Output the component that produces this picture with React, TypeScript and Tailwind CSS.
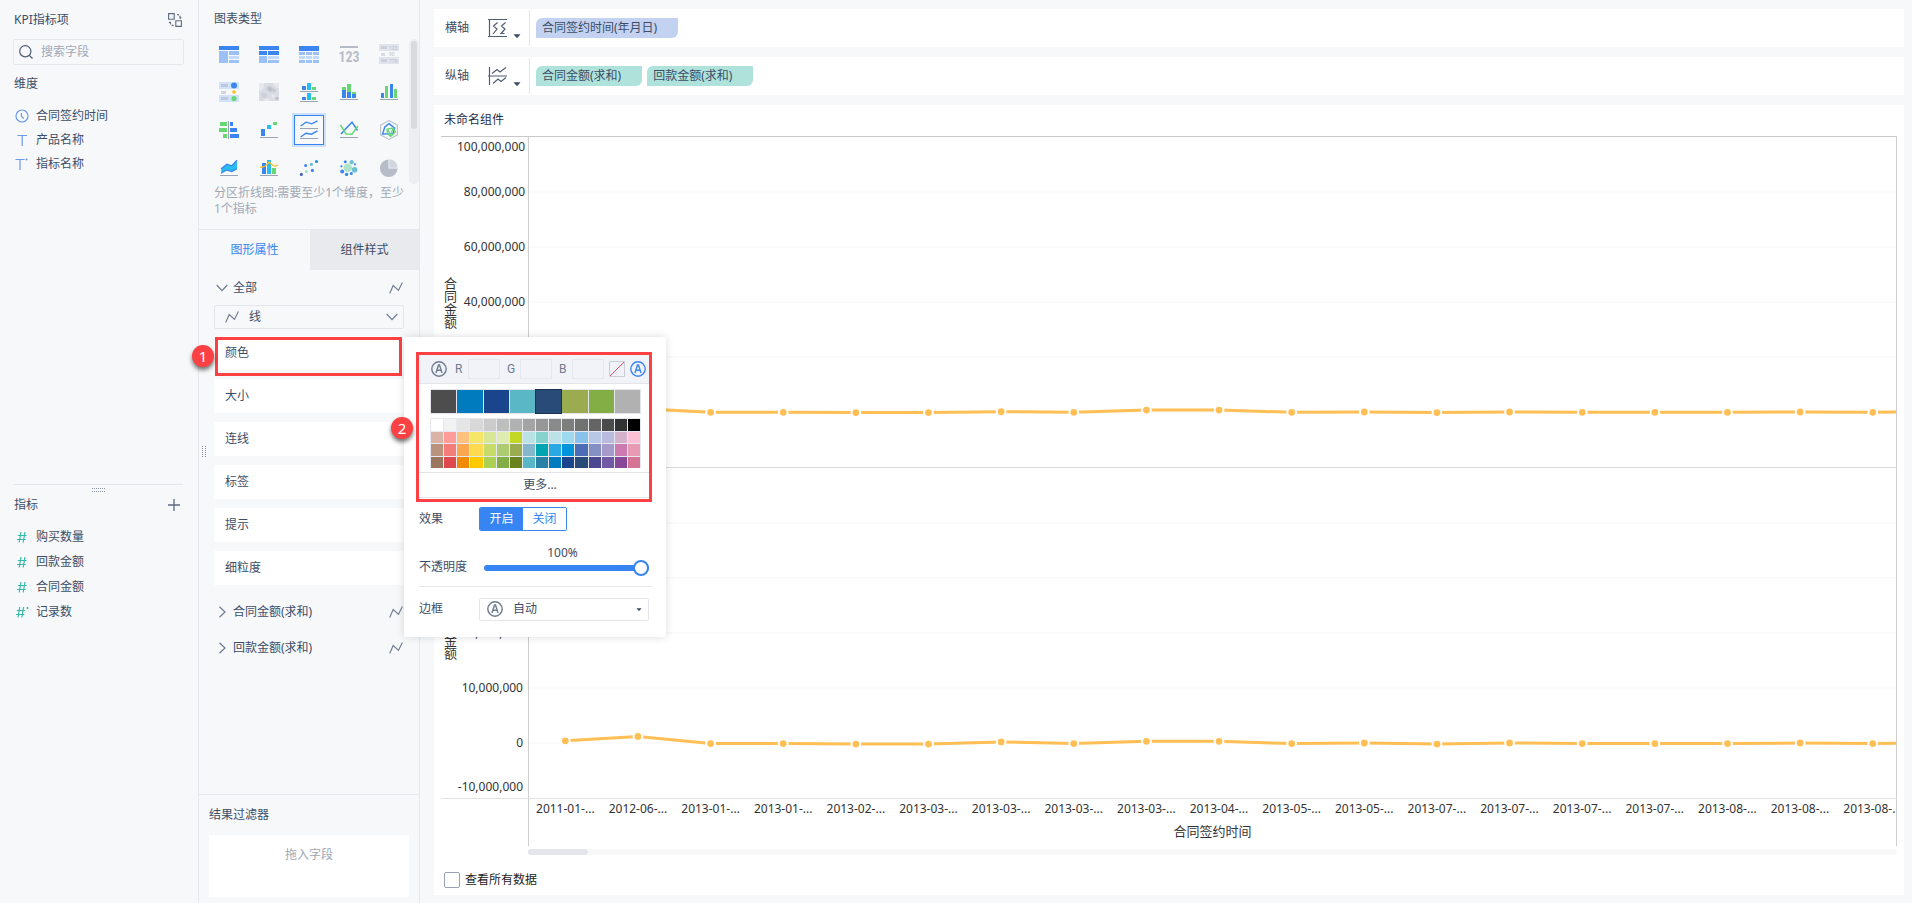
import React from "react";

const BLUE = "#3a85f0";
const CYAN = "#27bdf0";
const GREEN = "#67d774";
const AXIS = "#9aa3b1";

const DATES = [
  "2011-01-...", "2012-06-...", "2013-01-...", "2013-01-...", "2013-02-...", "2013-03-...", "2013-03-...",
  "2013-03-...", "2013-03-...", "2013-04-...", "2013-05-...", "2013-05-...", "2013-07-...", "2013-07-...",
  "2013-07-...", "2013-07-...", "2013-08-...", "2013-08-...", "2013-08-...",
];

// Values in millions; the last one lies beyond the visible window.
const CONTRACT = [0.6, 1.3, -0.1, -0.1, -0.2, -0.2, 0.1, -0.1, 0.7, 0.7, -0.1, 0, -0.2, 0, -0.1, -0.1, -0.1, 0, -0.1, 0.1];
const PAYMENT = [0.4, 1.2, -0.1, -0.1, -0.2, -0.2, 0.2, -0.1, 0.3, 0.3, -0.1, 0, -0.2, 0, -0.1, -0.1, -0.1, 0, -0.1, 0.1];

// Number of categories that fit in the plot.
const VISIBLE = 18.82;

const THEME = ["#4d4d4d", "#007cbe", "#1a458c", "#5ab8c6", "#284b78", "#9aab50", "#83ae45", "#b1b1b1"];

const PALETTE = [
  "#ffffff", "#f2f2f2", "#e5e5e5", "#d8d8d8", "#cbcbcb", "#bebebe", "#b1b1b1", "#a4a4a4",
  "#979797", "#8a8a8a", "#7e7e7e", "#717171", "#646464", "#4b4b4b", "#323232", "#000000",
  "#d9b4a6", "#ff9c9a", "#ffc17f", "#f5e569", "#d7e697", "#dfebb0", "#c3d825", "#b8e2e4",
  "#85d3cc", "#bce1e7", "#9ed8ef", "#88c1ea", "#b9c7e6", "#b9badd", "#d5b2cc", "#fbc0d5",
  "#ba937f", "#f47d7a", "#fba74f", "#ffda4f", "#c7dc68", "#aecb71", "#9aab50", "#84b7cb",
  "#01a4b1", "#2aa8e1", "#0094dc", "#4c6db5", "#8490c3", "#a69aca", "#cb7bb0", "#e89ab5",
  "#9b765f", "#de4a4b", "#f18b07", "#fdca00", "#abd052", "#83ae45", "#69841e", "#5ab8c6",
  "#2982a6", "#007cbe", "#1a458c", "#284b78", "#4c488f", "#7259a4", "#884797", "#d57394",
];

function Bars({ items }: { items: [number, number, number, number, string][] }) {
  return (
    <>
      {items.map(([x, y, w, h, fill], i) => (
        <rect key={i} x={x} y={y} width={w} height={h} fill={fill} shapeRendering="crispEdges" />
      ))}
    </>
  );
}

function Dots({ items }: { items: [number, number, number, string][] }) {
  return (
    <>
      {items.map(([cx, cy, r, fill], i) => (
        <circle key={i} cx={cx} cy={cy} r={r} fill={fill} />
      ))}
    </>
  );
}

const L1 = "#9bc1f8";
const L2 = "#c2daf9";

const CHART_TYPES: { name: string; art: React.ReactNode }[] = [
  { name: "分组表", art: <Bars items={[[0, 2, 20, 4, BLUE], [0, 7, 9, 12, L1], [10, 7, 10, 4, L1], [10, 12, 10, 3, L2], [10, 16, 10, 3, L1]]} /> },
  { name: "交叉表", art: <Bars items={[[0, 2, 20, 4, BLUE], [0, 7, 8, 4, BLUE], [9, 7, 11, 4, BLUE], [0, 12, 8, 7, L1], [9, 12, 11, 3, L2], [9, 16, 11, 3, L1]]} /> },
  {
    name: "明细表",
    art: (
      <Bars
        items={[
          [0, 2, 20, 5, BLUE], [0, 8, 6, 3, L1], [7, 8, 6, 3, L1], [14, 8, 6, 3, L1],
          [0, 12, 6, 3, L2], [7, 12, 6, 3, L2], [14, 12, 6, 3, L2], [0, 16, 6, 3, L1], [7, 16, 6, 3, L1], [14, 16, 6, 3, L1],
        ]}
      />
    ),
  },
  {
    name: "KPI指标卡",
    art: (
      <>
        <Bars items={[[1, 2, 18, 2, "#b5bcc7"]]} />
        <text x="10" y="18" textAnchor="middle" fontSize="14" fontWeight="bold" fontFamily="'Liberation Sans Narrow', 'Roboto Condensed', Roboto, sans-serif" fill="#b8bec9">123</text>
      </>
    ),
  },
  {
    name: "颜色表格",
    art: (
      <>
        <Bars items={[[0, 0, 20, 7, "#e0e4ec"], [0, 13, 20, 7, "#e0e4ec"], [2, 2, 6, 3, "#ccd1da"], [2, 9, 4, 3, "#d8dbe1"], [2, 15, 6, 3, "#ccd1da"]]} />
        <text x="10" y="5.500" fontSize="5" fontFamily="Roboto, sans-serif" fill="#bcc2cd">123</text>
        <text x="10" y="12" fontSize="5" fontFamily="Roboto, sans-serif" fill="#bcc2cd">90</text>
        <text x="10" y="18.500" fontSize="5" fontFamily="Roboto, sans-serif" fill="#bcc2cd">778</text>
      </>
    ),
  },
  {
    name: "聚合气泡表",
    art: (
      <>
        <Bars items={[[0, 0, 20, 7, "#d2e2fc"], [0, 13, 20, 7, "#d2e2fc"], [2, 2, 7, 3, "#bcc8dc"], [2, 9, 5, 3, "#d3d6db"], [2, 15, 7, 3, "#bcc8dc"]]} />
        <Dots items={[[15, 3.6, 3, BLUE], [15, 10, 1.8, "#fbbf16"], [15, 16.5, 2.6, GREEN]]} />
      </>
    ),
  },
  {
    name: "热力区域图",
    art: (
      <>
        <rect y="1" width="20" height="18" fill="#d9dce2" />
        <path d="M0 1h5c-1 3 1 4-1 6S1 9 0 8zM14 1h6v5c-2 1-3-1-4-2s-2-1-2-3zM5 19c0-3 3-3 5-2l1 2z" fill="#e6e8ec" />
        <path d="M8 5c2-2 4-1 5 .500s4 1 4 3-3 2-5 1.500-3-.5-4-2-1-2 0-3z" fill="#c5cad2" />
        <path d="M3 11c2-1 4 0 5 2s-1 3-3 3-4-4-2-5z" fill="#ccd0d8" />
        <circle cx="11" cy="7" r="1.500" fill="#b6bcc7" />
        <circle cx="18" cy="16.500" r="1.500" fill="#b9bfca" />
        <circle cx="14" cy="14" r="1.600" fill="#e8eaee" />
      </>
    ),
  },
  {
    name: "分区柱形图",
    art: (
      <Bars
        items={[
          [3, 4, 4, 4, BLUE], [8, 1, 4, 7, CYAN], [13, 5, 4, 3, GREEN], [1, 9, 18, 1, AXIS],
          [3, 15, 4, 3, BLUE], [8, 11, 4, 7, CYAN], [13, 15, 4, 3, GREEN], [1, 19, 18, 1, AXIS],
        ]}
      />
    ),
  },
  {
    name: "堆积柱形图",
    art: (
      <Bars
        items={[
          [3, 5, 4, 3, GREEN], [3, 8, 4, 8, BLUE], [8, 2, 4, 8, GREEN], [8, 10, 4, 6, BLUE],
          [13, 10, 4, 2, GREEN], [13, 12, 4, 4, BLUE], [1, 17, 18, 1, AXIS],
        ]}
      />
    ),
  },
  { name: "多系列柱形图", art: <Bars items={[[2, 11, 3, 5, BLUE], [6, 4, 3, 12, GREEN], [11, 2, 3, 14, BLUE], [15, 7, 3, 9, GREEN], [1, 17, 18, 1, AXIS]]} /> },
  {
    name: "对比柱状图",
    art: (
      <Bars
        items={[
          [1, 2, 7, 4, GREEN], [0, 8, 8, 4, GREEN], [4, 14, 4, 4, GREEN], [9, 1, 1, 18, AXIS],
          [11, 2, 3, 4, BLUE], [11, 8, 7, 4, BLUE], [11, 14, 9, 4, BLUE],
        ]}
      />
    ),
  },
  { name: "瀑布图", art: <Bars items={[[2, 9, 4, 7, BLUE], [8, 5, 4, 4, CYAN], [14, 2, 4, 3, GREEN], [1, 17, 18, 1, AXIS]]} /> },
  {
    name: "分区折线图",
    art: (
      <>
        <path d="M1.7 6 7 2.2l5.7 1.6L18.5.8M1.7 17 7 13.2l5.5 1 6-3.4" fill="none" stroke={BLUE} strokeWidth="1.4" />
        <Bars items={[[1, 8, 18, 1, AXIS], [1, 18, 18, 1, AXIS]]} />
      </>
    ),
  },
  {
    name: "多系列折线图",
    art: (
      <>
        <path d="M2 14 6.5 9 13 2.2 18.5 10.5" fill="none" stroke={BLUE} strokeWidth="1.5" />
        <path d="M1.5 5 7 14l6 .3L18.8 6" fill="none" stroke={GREEN} strokeWidth="1.5" />
        <Bars items={[[1, 17, 18, 1, AXIS]]} />
      </>
    ),
  },
  {
    name: "雷达图",
    art: (
      <>
        <path d="M10 .6 18.4 5.2v9.6L10 19.4 1.6 14.8V5.2z" fill="none" stroke="#bcc2cc" strokeWidth="1.1" />
        <path d="M10 3.6 15.6 8 14 13.6 3.6 14 5.8 7z" fill="none" stroke={BLUE} strokeWidth="1.4" />
        <path d="M8 9.2 14 8l2.5 4-4.8 4.5L8.4 14zM8.4 9.4l3.4 5.4L14 8" fill="none" stroke={GREEN} strokeWidth="1.3" />
      </>
    ),
  },
  {
    name: "面积图",
    art: (
      <>
        <path d="M2.3 10.8 7.8 6.2l5 1.6L18 2.4v8.4L12.8 13.6 7.5 12l-5.2 3z" fill={CYAN} />
        <path d="M2 11 7.8 6.2l5 1.6L18 2.2M2 15.2 7.5 12l5.3 1.6 5.2-2.8" fill="none" stroke={BLUE} strokeWidth="1.3" />
        <Bars items={[[1, 17, 18, 1, AXIS]]} />
      </>
    ),
  },
  {
    name: "组合图",
    art: (
      <>
        <Bars items={[[3, 5, 4, 11, BLUE], [8, 2, 4, 14, CYAN], [13, 10, 4, 6, GREEN], [1, 17, 18, 1, AXIS]]} />
        <path d="M1 9.3c4 .2 6-.8 9-5.1 3 1.200 3 5.800 9 3" fill="none" stroke="#fbc02a" strokeWidth="1.4" />
      </>
    ),
  },
  {
    name: "散点图",
    art: (
      <Dots items={[[2.4, 16.4, 1.6, "#4a67c0"], [6.6, 7.4, 1.5, BLUE], [7.4, 13.4, 1.5, "#a9dfc9"], [12.4, 6.4, 1.6, "#6bc1cf"], [13.4, 12.4, 1.6, BLUE], [17.5, 3.5, 1.6, "#2a8fd8"]]} />
    ),
  },
  {
    name: "聚合气泡图",
    art: (
      <Dots
        items={[
          [8.8, 9.7, 4.2, "#aee3c8"], [6.3, 3.7, 1.5, BLUE], [12.6, 4.2, 2.1, "#6bc1cf"], [16, 6.3, 1.1, BLUE], [15.6, 11.7, 2.8, "#6bc1cf"],
          [12.3, 15.6, 1.5, BLUE], [7.6, 16.4, 1.7, "#2a8fd8"], [3.2, 13.6, 2, BLUE], [2.4, 8.3, 1.1, BLUE],
        ]}
      />
    ),
  },
  {
    name: "饼图",
    art: (
      <>
        <circle cx="9.7" cy="10.3" r="8.8" fill="#b6bdc8" />
        <path d="M9.500 10.500V1a9.300 9.300 0 0 1 9.500 9.500z" fill="#f7f8fa" />
        <path d="M10.300 9.700V1.300a8.400 8.400 0 0 1 8.400 8.400z" fill="#d1d6df" />
      </>
    ),
  },
];

function LineIcon() {
  return (
    <svg className="h-3.5 w-3.5" viewBox="0 0 14 14" fill="none" stroke="#6f7b90" strokeWidth="1.1">
      <path d="M.7 12.500 4.200 4.500 9.500 9.300 13.400 1.500" />
    </svg>
  );
}

function Chevron({ dir = "down" }: { dir?: "down" | "right" }) {
  return (
    <svg className="h-3 w-3" viewBox="0 0 12 12" fill="none" stroke="#6f7b90" strokeWidth="1.2">
      <path d={dir === "down" ? "M.7 3 6 8.600 11.300 3" : "M3.500.7 9 6l-5.500 5.300"} />
    </svg>
  );
}

function AutoIcon({ color }: { color: string }) {
  return (
    <svg className="h-4 w-4" viewBox="0 0 16 16" fill="none" stroke={color} strokeWidth="1.4">
      <circle cx="8" cy="8" r="7.2" />
      <path d="M5 12 7.500 4h1L11 12M6 9.300h4" />
    </svg>
  );
}

function Caret({ small = false }: { small?: boolean }) {
  return (
    <svg className={small ? "h-[3px] w-1.5" : "h-1 w-2"} viewBox="0 0 8 4" fill="#3d4d66">
      <path d="M.5.300h7L4.500 3.800h-1z" />
    </svg>
  );
}

const DIMENSIONS = [
  { label: "合同签约时间", icon: <path d="M7 1a6 6 0 1 1 0 12A6 6 0 0 1 7 1zM6.500 4v3.500l2.500 2" /> },
  { label: "产品名称", icon: <path d="M2.500 2.500h9.500M7.200 2.500V13" /> },
  { label: "指标名称", icon: <path d="M.5 2.500h9M5 2.500V13M11.500 1.500v2M10.500 2.500h2" /> },
];

const HASH = "M2.800 5.500h8.700M2 9.500h8.700M6 2 4.200 12.500M10 2 8.200 12.500";
const MEASURES = [
  { label: "购买数量", d: HASH },
  { label: "回款金额", d: HASH },
  { label: "合同金额", d: HASH },
  { label: "记录数", d: "M1.800 5.500h8.200M1 9.500h8.200M4.800 2 3 12.500M8.600 2 6.800 12.500M12.500 2v2M11.500 3h2" },
];

function FieldPanel() {
  return (
    <aside className="flex h-full w-[199px] shrink-0 flex-col border-r border-[#e6e8eb] pl-[14px] pr-[15px]">
      <div className="flex min-h-0 flex-1 flex-col pt-2.5">
        <div className="flex items-center justify-between leading-5">
          <h2>KPI指标项</h2>
          <button aria-label="切换数据" className="mr-px">
            <svg className="h-3.5 w-3.5" viewBox="0 0 14 14" fill="none" stroke="#5d6a80" strokeWidth="1.1">
              <path d="M.6.600h5.600v5.600H.6zM7.800 7.800h5.600v5.600H7.800z" />
              <path d="M9 1.500c2 .2 3.300 1 3.300 4M5.800 12.500c-2-.2-3.800-1-3.800-3.500" strokeDasharray="2.200 1" />
              <path d="M11 4.500h2.800l-1.400 1.700zM.6 10h2.800L2 8.300z" fill="#5d6a80" stroke="none" />
            </svg>
          </button>
        </div>
        <label className="-mx-px mt-[9px] flex h-[26px] items-center gap-2 rounded-xs border border-[#e6e8eb] pl-[5px]">
          <svg className="h-3.5 w-3.5 shrink-0" viewBox="0 0 14 14" fill="none" stroke="#4f5d75" strokeWidth="1.2">
            <circle cx="6.300" cy="6.300" r="5.600" />
            <path d="m10.300 10.300 3.200 3.200" />
          </svg>
          <input aria-label="搜索字段" placeholder="搜索字段" className="w-full min-w-0 bg-transparent outline-none placeholder:text-[#a0a8b4]" />
        </label>
        <h3 className="mt-[9px] leading-5">维度</h3>
        <ul className="mt-2.5">
          {DIMENSIONS.map((d) => (
            <li key={d.label} className="flex h-6 items-center gap-[7px] pl-px">
              <svg className="h-3.5 w-3.5" viewBox="0 0 14 14" fill="none" stroke="#6d9aeb" strokeWidth="1.2">{d.icon}</svg>
              {d.label}
            </li>
          ))}
        </ul>
      </div>
      <div className="h-[419px] shrink-0 border-t border-[#e3e6ea]">
        <div className="flex h-2.5 justify-center">
          <svg className="mt-[3px] h-1 w-[13px]" viewBox="0 0 13 4" stroke="#8892a3" strokeWidth="1" strokeDasharray="1 1">
            <path d="M0 .5h13M0 3.500h13" />
          </svg>
        </div>
        <div className="flex items-center justify-between leading-5">
          <h3>指标</h3>
          <button aria-label="新增指标" className="mr-[3px]">
            <svg className="h-3 w-3" viewBox="0 0 12 12" stroke="#5d6a80" strokeWidth="1.300">
              <path d="M0 6h12M6 0v12" />
            </svg>
          </button>
        </div>
        <ul className="mt-[9px]">
          {MEASURES.map((m) => (
            <li key={m.label} className="flex h-[25px] items-center gap-[7px] pl-px">
              <svg className="h-3.5 w-3.5" viewBox="0 0 14 14" fill="none" stroke="#35b9ab" strokeWidth="1.2"><path d={m.d} /></svg>
              {m.label}
            </li>
          ))}
        </ul>
      </div>
    </aside>
  );
}

function ChannelBox({ children }: { children: string }) {
  return (
    <label className="mr-[7px] flex items-center font-[Roboto,sans-serif] text-[#6f7b90]">
      <span className="w-[13px]">{children}</span>
      <input className="h-5 w-8 border border-[#e6e8ed] bg-transparent" />
    </label>
  );
}

function ColorPopup() {
  return (
    <div className="absolute left-full top-px z-10 w-[262px] rounded-xs bg-white pb-4 pl-[12px] pr-[14px] pt-[15px] shadow-[0_0_8px_rgba(0,0,0,0.14)]">
      <span className="absolute -left-[13px] top-20 flex h-[22px] w-[22px] items-center justify-center rounded-full bg-[#fb4143] text-[15px] text-white shadow-[0_3px_4px_rgba(0,0,0,0.55)]">2</span>
      <div className="border-[3px] border-[#fb4143]">
        <div className="flex h-[29px] items-center border-b border-[#e3e5ea] bg-[#f2f3f8] pl-3">
          <button aria-label="自动" className="mr-2"><AutoIcon color="#6f7b90" /></button>
          <ChannelBox>R</ChannelBox>
          <ChannelBox>G</ChannelBox>
          <ChannelBox>B</ChannelBox>
          <button aria-label="透明" className="-ml-0.5 mr-[5px]">
            <svg className="h-4 w-4" viewBox="0 0 16 16" fill="none">
              <path d="M.5.500h15v15H.5z" stroke="#c9cdd6" />
              <path d="M1 15 15 1" stroke="#f2545a" />
            </svg>
          </button>
          <button aria-label="自动颜色"><AutoIcon color={BLUE} /></button>
        </div>
        <div className="pl-[11px] pr-2 pt-[5px]">
          <div className="grid h-[25px] grid-cols-8 gap-px bg-[#e3e5ea] p-px">
            {THEME.map((c) => (
              <button key={c} aria-label={c} className={c === "#284b78" ? "outline outline-[#1d3050]" : ""} style={{ backgroundColor: c }} />
            ))}
          </div>
          <div className="mt-1 grid h-[50px] grid-cols-16 grid-rows-[12px_11px_12px_11px] gap-px bg-[#e6e8ef] px-px pt-px">
            {PALETTE.map((c, i) => (
              <button key={i} aria-label={c} style={{ backgroundColor: c }} />
            ))}
          </div>
        </div>
        <button className="mt-1 block h-[26px] w-full border-y border-[#e3e5ea] pl-3">更多...</button>
        <div className="h-px" />
      </div>
      <div className="ml-[3px]">
        <div className="mt-[5px] flex h-6 items-center">
          <span className="w-[60px]">效果</span>
          <div className="flex h-6 w-[88px] overflow-hidden rounded-xs border border-[#3685f2]">
            <button className="flex-1 bg-[#3685f2] text-white">开启</button>
            <button className="flex-1 bg-white text-[#3685f2]">关闭</button>
          </div>
        </div>
        <div className="mt-3.5 flex items-end">
          <label htmlFor="opacity" className="w-[65px] shrink-0 leading-5">不透明度</label>
          <div className="mr-[3px] flex flex-1 flex-col pb-px">
            <output htmlFor="opacity" className="-ml-2 text-center leading-4">100%</output>
            <input
              id="opacity"
              type="range"
              defaultValue={100}
              className="-mt-px h-4 w-full appearance-none bg-transparent [&::-webkit-slider-runnable-track]:h-1.5 [&::-webkit-slider-runnable-track]:rounded-full [&::-webkit-slider-runnable-track]:bg-[#3685f2] [&::-webkit-slider-thumb]:-mt-[5px] [&::-webkit-slider-thumb]:h-4 [&::-webkit-slider-thumb]:w-4 [&::-webkit-slider-thumb]:appearance-none [&::-webkit-slider-thumb]:rounded-full [&::-webkit-slider-thumb]:border-2 [&::-webkit-slider-thumb]:border-[#3685f2] [&::-webkit-slider-thumb]:bg-white"
            />
          </div>
        </div>
        <hr className="mt-[9px] border-[#e6e8eb]" />
        <div className="mt-2.5 flex h-6 items-center">
          <span className="w-[60px]">边框</span>
          <button className="mr-[3px] flex h-[23px] flex-1 items-center rounded-xs border border-[#e3e5ea] pl-[7px] pr-1.5">
            <AutoIcon color="#6f7b90" />
            <span className="ml-2.5 mr-auto">自动</span>
            <Caret small />
          </button>
        </div>
      </div>
    </div>
  );
}

function ConfigPanel() {
  return (
    <section className="flex h-full w-[221px] shrink-0 flex-col border-r border-[#e6e8eb]">
      <h2 className="pl-[15px] pt-2 leading-[22px]">图表类型</h2>
      <div className="mt-[5px] flex h-[150px]">
        <div className="ml-2.5 grid h-full w-[200px] grid-cols-5 content-start">
          {CHART_TYPES.map((t) => (
            <button key={t.name} aria-label={t.name} className="flex h-[38px] items-center justify-center">
              <span className={t.name === "分区折线图" ? "border-2 border-[#cfe0f9]" : ""}>
                <span className={t.name === "分区折线图" ? "flex h-[30px] w-[30px] items-center justify-center border border-[#3685f2]" : ""}>
                  <svg className="h-5 w-5" viewBox="0 0 20 20">{t.art}</svg>
                </span>
              </span>
            </button>
          ))}
        </div>
        <div className="mt-1 h-[145px] w-2.5 rounded-full bg-[#eceef1] px-0.5 pt-0.5">
          <div className="h-[88px] rounded-full bg-[#d8dade]" />
        </div>
      </div>
      <p className="h-11 px-[15px] pr-3 leading-4 text-[#a0a8b4]">分区折线图:需要至少1个维度，至少1个指标</p>
      <div role="tablist" className="flex h-[41px] shrink-0 border-t border-[#e6e8eb]">
        <button role="tab" aria-selected="true" className="w-[111px] text-[#3685f2]">图形属性</button>
        <button role="tab" aria-selected="false" className="flex-1 bg-[#e8eaed]">组件样式</button>
      </div>
      <div className="relative flex min-h-0 flex-1 flex-col px-[15px]">
        <svg className="absolute left-[3px] top-[176px] h-3 w-1" viewBox="0 0 4 12" stroke="#7d8797" strokeWidth="1" strokeDasharray="1 1">
          <path d="M.5 0v12M3.500 0v12" />
        </svg>
        <div className="flex h-[35px] items-center pl-0.5 pr-px">
          <Chevron />
          <span className="ml-[5px] mr-auto">全部</span>
          <LineIcon />
        </div>
        <button className="flex h-6 items-center rounded-xs border border-[#e3e5ea] pl-2.5 pr-[5px]">
          <LineIcon />
          <span className="ml-2.5 mr-auto">线</span>
          <Chevron />
        </button>
        <div className="mt-[7px] flex flex-col gap-[9px]">
          <div className="relative">
            <button className="h-[34px] w-full bg-white pl-[11px] text-left">颜色</button>
            <div className="pointer-events-none absolute left-px right-0.5 top-px h-[39px] border-[3px] border-[#fb4143]" />
            <span className="absolute -left-[22px] top-[9px] flex h-[22px] w-[22px] items-center justify-center rounded-full bg-[#fb4143] text-[15px] text-white shadow-[0_3px_4px_rgba(0,0,0,0.55)]">1</span>
            <ColorPopup />
          </div>
          {["大小", "连线", "标签", "提示", "细粒度"].map((t) => (
            <button key={t} className="h-[34px] w-full bg-white pl-[11px] text-left">{t}</button>
          ))}
        </div>
        <div className="mt-[9px]">
          {["合同金额(求和)", "回款金额(求和)"].map((t) => (
            <div key={t} className="flex h-9 items-center pl-0.5 pr-px">
              <Chevron dir="right" />
              <span className="ml-[5px] mr-auto">{t}</span>
              <LineIcon />
            </div>
          ))}
        </div>
      </div>
      <div className="border-t border-[#e6e8eb] px-2.5 pb-1.5 pt-2.5">
        <h3 className="leading-5">结果过滤器</h3>
        <div className="mt-2.5 h-[62px] bg-white pt-2.5 text-center leading-5 text-[#a0a8b4]">拖入字段</div>
      </div>
    </section>
  );
}

function Shelf({ label, icon, pills, tone }: { label: string; icon: React.ReactNode; pills: string[]; tone: string }) {
  return (
    <div className="flex h-[38px] shrink-0 items-center bg-white pl-[11px]">
      <span className="w-[43px]">{label}</span>
      <button aria-label={label + "设置"} className="flex w-[41px] items-end gap-[5px]">
        <svg className="h-5 w-5" viewBox="0 0 20 20" fill="none" stroke="#4f5d75" strokeWidth="1.2">{icon}</svg>
        <Caret />
      </button>
      <div className="flex h-9 items-center gap-[5px] border-l border-[#e3e5ea] pl-1.5">
        {pills.map((p) => (
          <span key={p} className={`flex h-5 items-center rounded-br-md rounded-tl-md pl-1.5 pr-[21px] ${tone}`}>{p}</span>
        ))}
      </div>
    </div>
  );
}

function Panel({ title, ticks, data, max, range, line }: { title: string; ticks: string[]; data: number[]; max: number; range: number; line: string }) {
  const x = (i: number) => `${((i + 0.5) / VISIBLE) * 100}%`;
  const y = (v: number) => `${((max - v) / range) * 100}%`;
  return (
    <div className={`flex min-h-0 flex-1 border-t ${line}`}>
      <div className="flex w-[87px] shrink-0 justify-between pl-[3px] pr-[5px]">
        <div className="flex w-[13px] shrink-0 items-center pt-0.5 text-[13px] leading-[13px]">{title}</div>
        <div className="flex flex-col">
          {ticks.slice(0, 6).map((t, i) => (
            <div key={t} className="flex flex-1 flex-col items-end justify-between">
              <span className={i === 0 ? "flex h-5 items-center" : "flex h-0 items-center"}>{t}</span>
              {i === 5 && <span className="flex h-[22px] items-center">{ticks[6]}</span>}
            </div>
          ))}
        </div>
      </div>
      <div className="min-w-0 flex-1 border-x border-[#cfcfcf]">
        <svg className="block h-full w-full overflow-hidden">
          {[1, 2, 3, 4, 5].map((k) => (
            <line key={k} x1="0" x2="100%" y1={`${(k / 6) * 100}%`} y2={`${(k / 6) * 100}%`} stroke="#f5f5f5" />
          ))}
          {data.slice(1).map((v, i) => (
            <line key={i} x1={x(i)} y1={y(data[i])} x2={x(i + 1)} y2={y(v)} stroke="#ffbf55" strokeWidth="3" />
          ))}
          {data.map((v, i) => (
            <circle key={i} cx={x(i)} cy={y(v)} r="4.400" fill="#ffbf55" stroke="#fff" strokeWidth="2" />
          ))}
        </svg>
      </div>
    </div>
  );
}

function ChartCard() {
  return (
    <div className="flex min-h-0 flex-1 flex-col bg-white px-[7px]">
      <h1 className="h-[31px] shrink-0 pl-[3px] leading-[30px] text-[#1f2d47]">未命名组件</h1>
      <div className="flex min-h-0 flex-1 flex-col text-[#333]">
        <Panel
          title="合同金额"
          ticks={["100,000,000", "80,000,000", "60,000,000", "40,000,000", "20,000,000", "0", "-20,000,000"]}
          data={CONTRACT}
          max={100}
          range={120}
          line="border-[#c8c8c8]"
        />
        <Panel
          title="回款金额"
          ticks={["50,000,000", "40,000,000", "30,000,000", "20,000,000", "10,000,000", "0", "-10,000,000"]}
          data={PAYMENT}
          max={50}
          range={60}
          line="border-[#d8d8d8]"
        />
        <div className="flex h-12 shrink-0 border-t border-[#e0e0e0]">
          <div className="w-[87px] shrink-0" />
          <div className="min-w-0 flex-1 overflow-hidden border-x border-[#cfcfcf]">
            <div className="flex h-5">
              {DATES.map((d, i) => (
                <span key={i} className="shrink-0 text-center leading-5" style={{ width: `${100 / VISIBLE}%` }}>{d}</span>
              ))}
            </div>
            <div className="mt-0.5 text-center text-[13px] leading-5">合同签约时间</div>
          </div>
        </div>
      </div>
      <div className="ml-[87px] mt-[3px] h-1.5 shrink-0 rounded-full bg-[#f8f8f9]">
        <div className="h-full w-[60px] rounded-full bg-[#e3e5ea]" />
      </div>
      <label className="flex h-10 shrink-0 items-center gap-[5px] pl-[3px] pt-2.5 text-[#222]">
        <input type="checkbox" className="h-4 w-4 appearance-none rounded-xs border border-[#97a2b5] bg-white" />
        查看所有数据
      </label>
    </div>
  );
}

export default function App() {
  return (
    <div className="flex h-screen min-h-[720px] w-full overflow-hidden bg-[#f7f8fa] font-['Noto_Sans','Noto_Sans_CJK_SC',sans-serif] text-xs text-[#3d4d66]">
      <FieldPanel />
      <ConfigPanel />
      <main className="flex h-full min-w-0 flex-1 flex-col gap-2.5 pb-2 pl-3.5 pr-2 pt-[9px]">
        <Shelf
          label="横轴"
          icon={<path d="M1.500 1v18M0 1.500h19M0 18.500h19M9.500 4.500 5.500 8l3.500 3-4 5M17.500 4.500 13.500 8l3.500 3-4 4.500h3.500" />}
          pills={["合同签约时间(年月日)"]}
          tone="bg-[#c3d2f0]"
        />
        <Shelf
          label="纵轴"
          icon={<path d="M1.500 1v18M0 10h19M4 7.500 9 3.500l3 2.500L18 1.500M5 17.500l5-4.500 3 2.500 5-4" />}
          pills={["合同金额(求和)", "回款金额(求和)"]}
          tone="bg-[#b0e2dc]"
        />
        <ChartCard />
      </main>
    </div>
  );
}
